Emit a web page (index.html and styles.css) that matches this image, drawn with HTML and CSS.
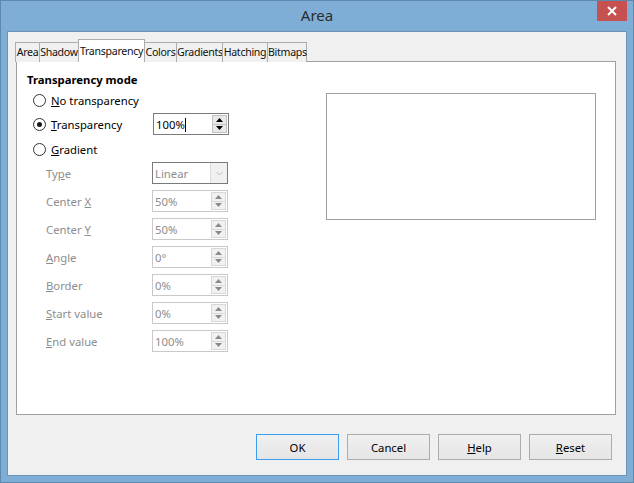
FILE: index.html
```html
<!DOCTYPE html>
<html>
<head>
<meta charset="utf-8">
<link rel="stylesheet" href="styles.css">
</head>
<body>
<div class="window">
  <div class="titlebar">
    <span class="title">Area</span>
    <div class="close"><svg width="10" height="10" viewBox="0 0 10 10"><path d="M1 1L9 9M9 1L1 9" stroke="#fff" stroke-width="2"/></svg></div>
  </div>
  <div class="client">
    <div class="tabs">
      <div class="tab t-area">Area</div>
      <div class="tab t-shadow">Shadow</div>
      <div class="tab sel t-transp">Transparency</div>
      <div class="tab t-colors">Colors</div>
      <div class="tab t-grad">Gradients</div>
      <div class="tab t-hatch">Hatching</div>
      <div class="tab t-bitmap">Bitmaps</div>
    </div>
    <div class="panel">
      <div class="left">
        <div class="heading">Transparency mode</div>
        <div class="radio-row r1"><span class="radio"></span><span><u>N</u>o transparency</span></div>
        <div class="radio-row r2"><span class="radio on"></span><span class="rlabel"><u>T</u>ransparency</span>
          <div class="field focus"><span class="val">100%<span class="caret"></span></span><span class="spin"><span class="up"><svg width="7" height="4" viewBox="0 0 7 4"><path d="M0 4L3.5 0L7 4Z" fill="#000"/></svg></span><span class="dn"><svg width="7" height="4" viewBox="0 0 7 4"><path d="M0 0L3.5 4L7 0Z" fill="#000"/></svg></span></span></div>
        </div>
        <div class="radio-row r3"><span class="radio"></span><span><u>G</u>radient</span></div>
        <div class="grad">
          <div class="grow"><span class="glabel">Ty<u>p</u>e</span>
            <div class="field dis combo"><span class="val">Linear</span><span class="drop"><svg width="7" height="5" viewBox="0 0 7 5"><path d="M0.5 1L3.5 4L6.5 1" fill="none" stroke="#b8b8b8" stroke-width="1"/></svg></span></div></div>
          <div class="grow"><span class="glabel">Center <u>X</u></span>
            <div class="field dis"><span class="val">50%</span><span class="spin"><span class="up"><svg width="7" height="4" viewBox="0 0 7 4"><path d="M0 4L3.5 0L7 4Z" fill="#8a8a8a"/></svg></span><span class="dn"><svg width="7" height="4" viewBox="0 0 7 4"><path d="M0 0L3.5 4L7 0Z" fill="#8a8a8a"/></svg></span></span></div></div>
          <div class="grow"><span class="glabel">Center <u>Y</u></span>
            <div class="field dis"><span class="val">50%</span><span class="spin"><span class="up"><svg width="7" height="4" viewBox="0 0 7 4"><path d="M0 4L3.5 0L7 4Z" fill="#8a8a8a"/></svg></span><span class="dn"><svg width="7" height="4" viewBox="0 0 7 4"><path d="M0 0L3.5 4L7 0Z" fill="#8a8a8a"/></svg></span></span></div></div>
          <div class="grow"><span class="glabel"><u>A</u>ngle</span>
            <div class="field dis"><span class="val">0°</span><span class="spin"><span class="up"><svg width="7" height="4" viewBox="0 0 7 4"><path d="M0 4L3.5 0L7 4Z" fill="#8a8a8a"/></svg></span><span class="dn"><svg width="7" height="4" viewBox="0 0 7 4"><path d="M0 0L3.5 4L7 0Z" fill="#8a8a8a"/></svg></span></span></div></div>
          <div class="grow"><span class="glabel"><u>B</u>order</span>
            <div class="field dis"><span class="val">0%</span><span class="spin"><span class="up"><svg width="7" height="4" viewBox="0 0 7 4"><path d="M0 4L3.5 0L7 4Z" fill="#8a8a8a"/></svg></span><span class="dn"><svg width="7" height="4" viewBox="0 0 7 4"><path d="M0 0L3.5 4L7 0Z" fill="#8a8a8a"/></svg></span></span></div></div>
          <div class="grow"><span class="glabel"><u>S</u>tart value</span>
            <div class="field dis"><span class="val">0%</span><span class="spin"><span class="up"><svg width="7" height="4" viewBox="0 0 7 4"><path d="M0 4L3.5 0L7 4Z" fill="#8a8a8a"/></svg></span><span class="dn"><svg width="7" height="4" viewBox="0 0 7 4"><path d="M0 0L3.5 4L7 0Z" fill="#8a8a8a"/></svg></span></span></div></div>
          <div class="grow"><span class="glabel"><u>E</u>nd value</span>
            <div class="field dis"><span class="val">100%</span><span class="spin"><span class="up"><svg width="7" height="4" viewBox="0 0 7 4"><path d="M0 4L3.5 0L7 4Z" fill="#8a8a8a"/></svg></span><span class="dn"><svg width="7" height="4" viewBox="0 0 7 4"><path d="M0 0L3.5 4L7 0Z" fill="#8a8a8a"/></svg></span></span></div></div>
        </div>
      </div>
      <div class="preview"></div>
    </div>
    <div class="buttons">
      <div class="btn default">OK</div>
      <div class="btn">Cancel</div>
      <div class="btn"><u>H</u>elp</div>
      <div class="btn"><u>R</u>eset</div>
    </div>
  </div>
</div>
</body>
</html>
```
FILE: styles.css
```css
html, body { margin: 0; padding: 0; }
body { font-family: "Noto Sans", "Open Sans", sans-serif; font-size: 11.3px; color: #000; }
.window {
  width: 634px; height: 483px; box-sizing: border-box;
  background: #7eaed6; border: 1px solid #5f88ad;
  padding: 0 6px 6px 6px; display: flex; flex-direction: column;
}
.titlebar { height: 30px; position: relative; display: flex; justify-content: center; align-items: center; flex: none; }
.title { font-size: 15px; color: #2b2b2b; margin-top: -2px; }
.close {
  position: absolute; right: 0; top: 0; width: 30px; height: 20px;
  background: #c75050; display: flex; align-items: center; justify-content: center;
}
.client {
  flex: 1; background: #f0f0f0; border: 1px solid #6f93b6;
  display: flex; flex-direction: column; padding: 7px 14px 0 7px;
}
.tabs { display: flex; align-items: flex-end; height: 23px; margin-bottom: -1px; position: relative; z-index: 1; }
.tab {
  height: 20px; box-sizing: border-box; border: 1px solid #acacac; border-bottom: none;
  background: #f0f0f0; padding: 0; line-height: 19px; margin-right: -1px; white-space: nowrap;
  font-size: 10.6px; letter-spacing: -0.3px; color: #111; text-align: center; flex: none;
}
.tab.sel { height: 23px; background: #fff; line-height: 22px; }
.t-area { width: 25px; }
.t-shadow { width: 40px; }
.t-transp { width: 67px; }
.t-colors { width: 33px; }
.t-grad { width: 47px; }
.t-hatch { width: 46px; }
.t-bitmap { width: 40px; }
.panel {
  margin-left: 1px; width: 600px; height: 354px; box-sizing: border-box;
  background: #fff; border: 1px solid #a0a0a0; display: flex; padding: 0;
}
.left { width: 300px; padding: 10px 0 0 10px; box-sizing: border-box; }
.heading { font-weight: bold; height: 16px; line-height: 16px; }
.radio-row { display: flex; align-items: center; height: 24px; padding-left: 6px; }
.radio-row.r3 { height: 26px; }
.radio {
  width: 11px; height: 11px; border: 1px solid #333; border-radius: 50%; background: #fff;
  margin-right: 5px; position: relative; flex: none;
}
.radio.on::after {
  content: ""; position: absolute; left: 3px; top: 3px; width: 5px; height: 5px; border-radius: 50%; background: #1a1a1a;
}
.rlabel { width: 102px; }
.field {
  width: 76px; height: 22px; box-sizing: border-box; border: 1px solid #7a7a7a; background: #fff;
  display: flex; align-items: center; justify-content: space-between; padding: 0 1px 0 2px;
}
.field.dis { border-color: #c9c9c9; color: #8d8d8d; }
.field.combo { border-color: #7a7a7a; }
.val { position: relative; }
.caret { display: inline-block; width: 1px; height: 14px; background: #000; vertical-align: -3px; }
.spin { display: flex; flex-direction: column; width: 15px; height: 18px; }
.spin .up, .spin .dn {
  flex: 1; display: flex; align-items: center; justify-content: center;
  background: #e9e9e9; border: 1px solid #c2c2c2;
}
.spin .up { border-bottom: none; }
.field.dis .spin .up, .field.dis .spin .dn { background: #f1f1f1; border-color: #d8d8d8; }
.drop {
  width: 16px; height: 20px; background: #f0f0f0; border-left: 1px solid #dcdcdc;
  display: flex; align-items: center; justify-content: center; margin-right: -1px;
}
.grad { display: flex; flex-direction: column; gap: 6px; }
.grow { display: flex; align-items: center; height: 22px; padding-left: 19px; }
.glabel { width: 106px; color: #8d8d8d; }
.preview {
  margin: 31px 0 0 9px; width: 270px; height: 127px; box-sizing: border-box; border: 1px solid #a0a0a0; background: #fff;
}
.buttons { display: flex; justify-content: flex-end; gap: 8px; margin-top: 19px; }
.btn {
  width: 83px; height: 26px; box-sizing: border-box; border: 1px solid #acacac;
  background: linear-gradient(#f0f0f0, #e5e5e5); display: flex; align-items: center; justify-content: center;
}
.btn.default { border-color: #3c9cf0; }
```
